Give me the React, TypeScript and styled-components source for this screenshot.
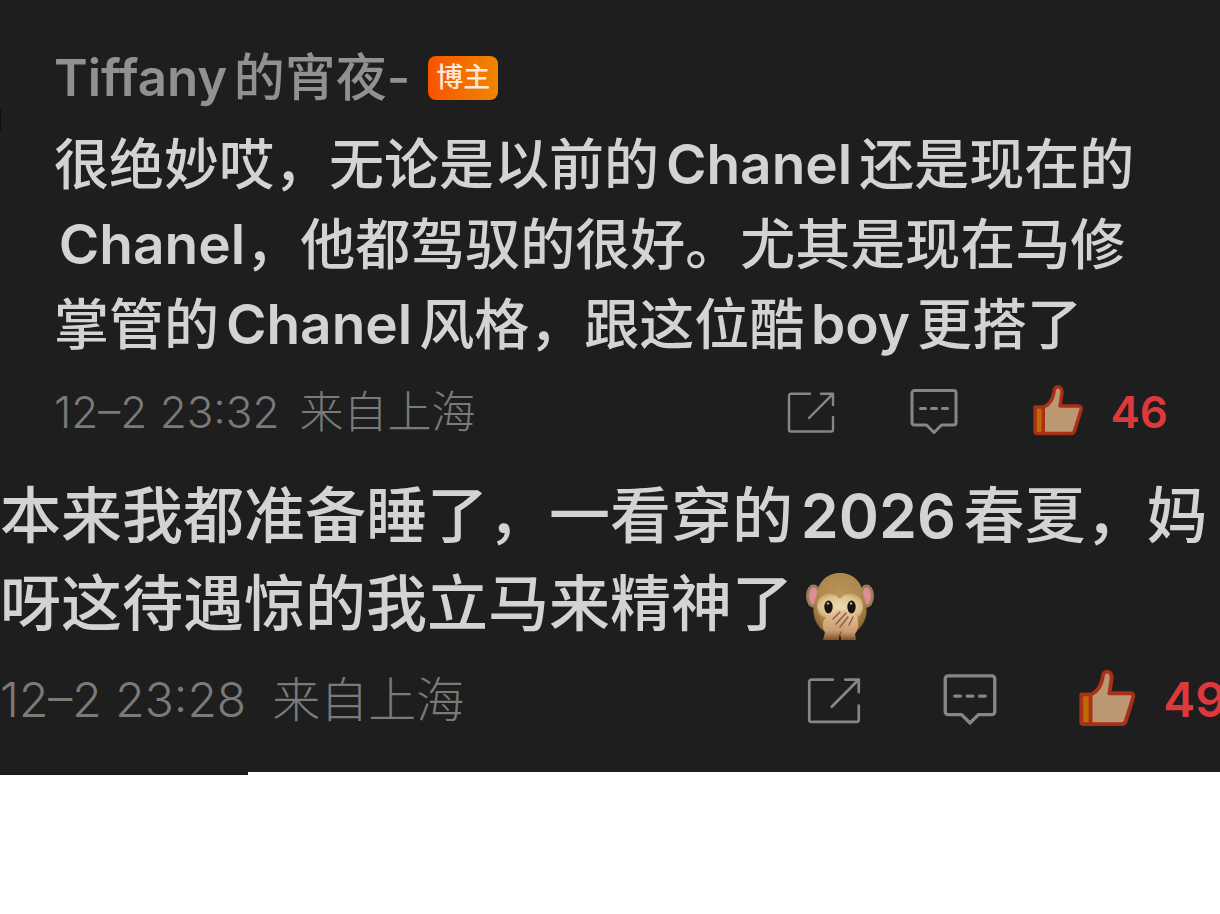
import React from "react";
import styled, { createGlobalStyle } from "styled-components";

const GlobalStyle = createGlobalStyle`
  * { box-sizing: border-box; }
  body {
    margin: 0;
    background: #ffffff;
    font-family: Inter, "Noto Sans CJK SC", sans-serif;
    text-autospace: normal;
  }
`;

const Thread = styled.main`
  position: relative;
  overflow: hidden;
  padding-bottom: 44px;
  background: #1e1e1e;
`;

const AvatarEdge = styled.span`
  position: absolute;
  left: -29px;
  top: 104px;
  width: 30px;
  height: 32px;
  border-radius: 8px;
  background: #0c0c0c;
`;

const Comment = styled.article<{ $inset?: boolean }>`
  padding: ${(p) => (p.$inset ? "48px 52px 0 54px" : "36px 0 0")};
`;

const Author = styled.header`
  display: flex;
  align-items: center;
  gap: 18px;
  height: 60px;
  margin-bottom: 16px;
`;

const Name = styled.a`
  color: #919191;
  font-size: 51px;
  font-weight: 500;
  line-height: 60px;
  text-decoration: none;
  white-space: nowrap;
`;

const Badge = styled.span`
  padding: 0 8px;
  border-radius: 8px;
  background: linear-gradient(90deg, #f75400, #ef8600);
  color: #ffe9da;
  font-size: 27px;
  font-weight: 500;
  line-height: 44px;
`;

const Body = styled.p<{ $large?: boolean }>`
  margin: 0;
  color: #d3d3d3;
  font-size: ${(p) => (p.$large ? 61 : 55)}px;
  font-weight: 500;
  line-height: ${(p) => (p.$large ? 88 : 80)}px;
  white-space: nowrap;
`;

const Latin = styled.span`
  font-weight: 600;
`;

const Meta = styled.footer<{ $large?: boolean }>`
  display: flex;
  align-items: center;
  justify-content: space-between;
  height: ${(p) => (p.$large ? 56 : 48)}px;
  margin-top: 24px;
  margin-right: ${(p) => (p.$large ? -6 : 0)}px;
  font-size: ${(p) => (p.$large ? 48 : 44)}px;
  line-height: ${(p) => (p.$large ? 56 : 48)}px;
`;

const Stamp = styled.div<{ $large?: boolean }>`
  display: flex;
  gap: ${(p) => (p.$large ? 26 : 20)}px;
  color: #7a7a7a;
  font-weight: 300;
  white-space: nowrap;
`;

const Actions = styled.div<{ $large?: boolean }>`
  display: flex;
  align-items: center;
  gap: ${(p) => (p.$large ? 82 : 75)}px;
`;

const Action = styled.button<{ $large?: boolean }>`
  display: flex;
  align-items: center;
  gap: 30px;
  padding: 0;
  border: 0;
  background: none;
  color: #dd393c;
  font: inherit;
  font-weight: 600;
  cursor: pointer;

  svg {
    display: block;
    width: ${(p) => (p.$large ? 54 : 48)}px;
    height: ${(p) => (p.$large ? 54 : 48)}px;
    overflow: visible;
  }
`;

const Emoji = styled.svg`
  width: 70px;
  height: 70px;
  margin-left: 12px;
  vertical-align: -15px;
`;

const BottomEdge = styled.div`
  width: 248px;
  height: 3px;
  background: #1e1a1c;
`;

const ShareIcon = () => (
  <svg viewBox="0 0 48 48" fill="none" stroke="#868686" strokeWidth="2.4" strokeLinejoin="round" strokeLinecap="round" aria-hidden="true">
    <path d="M23 5.8H4a2 2 0 0 0-2 2V41.500a2 2 0 0 0 2 2H44a2 2 0 0 0 2-2V29M34 5.800H46V17M46 5.800L22 30" />
  </svg>
);

const ReplyIcon = () => (
  <svg viewBox="0 0 48 48" fill="none" stroke="#868686" strokeWidth="3" strokeLinejoin="round" strokeLinecap="round" aria-hidden="true">
    <path d="M4.500 2.500H43.500a2.500 2.500 0 0 1 2.500 2.500V34.500a2.500 2.500 0 0 1-2.500 2.500H31.500L24 44.500L16.500 37H4.500A2.500 2.500 0 0 1 2 34.500V5A2.500 2.500 0 0 1 4.500 2.500Z" />
    <path d="M10.500 20.500h5M21.500 20.500h5M32.500 20.500h5" />
  </svg>
);

const LikeIcon = () => (
  <svg viewBox="1 3 48 48" aria-hidden="true">
    <path
      d="M3 22H12C18 19 21 14 22 7C22.300 3.500 23.500 1.800 26 1.800C29 1.800 30.300 4.500 30 8L28 21H46.500C49 21 49.800 22.500 49 25L42.500 46Q41.700 48.500 39 48.500H5Q3 48.500 3 46.500Z"
      fill="#bb9871"
    />
    <path d="M3 22H11V48H3Z" fill="#bd6a00" />
    <path
      d="M11.300 22V48M3 22H12C18 19 21 14 22 7C22.300 3.500 23.500 1.800 26 1.800C29 1.800 30.300 4.500 30 8L28 21H46.500C49 21 49.800 22.500 49 25L42.500 46Q41.700 48.500 39 48.500H5Q3 48.500 3 46.500Z"
      fill="none"
      stroke="#a93018"
      strokeWidth="3.400"
      strokeLinejoin="round"
    />
  </svg>
);

const MonkeyEmoji = () => (
  <Emoji viewBox="0 0 70 70" role="img" aria-label="捂嘴的猴子">
    <defs>
      <radialGradient id="fur" cx="50%" cy="40%" r="60%">
        <stop offset="0" stopColor="#bd9659" />
        <stop offset="0.75" stopColor="#ad864d" />
        <stop offset="1" stopColor="#83602f" />
      </radialGradient>
      <radialGradient id="face" cx="50%" cy="55%" r="60%">
        <stop offset="0" stopColor="#ecd9b0" />
        <stop offset="0.7" stopColor="#dfc492" />
        <stop offset="1" stopColor="#c6a26c" />
      </radialGradient>
      <linearGradient id="hand" x1="0" y1="0" x2="0" y2="1">
        <stop offset="0" stopColor="#e6c19a" />
        <stop offset="0.7" stopColor="#c99b70" />
        <stop offset="1" stopColor="#7d5026" />
      </linearGradient>
    </defs>
    <ellipse cx="8.500" cy="25" rx="7.500" ry="11.500" fill="#9c7d55" />
    <ellipse cx="61.500" cy="25" rx="7.500" ry="11.500" fill="#9c7d55" />
    <ellipse cx="8.500" cy="25" rx="4.500" ry="8.500" fill="#dc8c98" />
    <ellipse cx="61.500" cy="25" rx="4.500" ry="8.500" fill="#dc8c98" />
    <path d="M35 2C49 2 57 12 58.500 24C60 30 62 35 61.500 42C60 56 49 65 35 65C21 65 10 56 8.500 42C8 35 10 30 11.500 24C13 12 21 2 35 2Z" fill="url(#fur)" />
    <path d="M35 28C31 23 25 21.500 20 23.500C12 26.500 10.500 36 14 42C18 48 25 46 30 46H41C46 46 53 48 56.500 42C59.500 36 58 26.500 50 23.500C45 21.500 39 23 35 28Z" fill="url(#face)" />
    <ellipse cx="23.500" cy="36" rx="4.200" ry="6.500" fill="#191310" />
    <ellipse cx="46.500" cy="36" rx="4.200" ry="6.500" fill="#191310" />
    <circle cx="23" cy="32.500" r="1.300" fill="#aaa" />
    <circle cx="46" cy="32.500" r="1.300" fill="#aaa" />
    <path d="M51 69H36L35 56L43 45Q47 41 48 46L50 44Q53 44 52.500 49Q55 56 50 63Z" fill="url(#hand)" />
    <path d="M18 69L20 61C15 54 19 45 26 44L32 39Q35 38 35 41Q40 37 41 41Q45 41 43 45Q46 47 42 51L39 57Q37 62 34 64V69Z" fill="url(#hand)" />
    <path d="M35 41L28 48M41 42L31 53M43 46L35 56M48 46L44 54M34 65L36 61" fill="none" stroke="#8b5b38" strokeWidth="1.300" strokeLinecap="round" />
  </Emoji>
);

type MetaRowProps = { time: string; place: string; likes: number; large?: boolean };

const MetaRow = ({ time, place, likes, large }: MetaRowProps) => (
  <Meta $large={large}>
    <Stamp $large={large}>
      <time>{time}</time>
      <span>{place}</span>
    </Stamp>
    <Actions $large={large}>
      <Action $large={large} type="button" aria-label="转发"><ShareIcon /></Action>
      <Action $large={large} type="button" aria-label="评论"><ReplyIcon /></Action>
      <Action $large={large} type="button"><LikeIcon />{likes}</Action>
    </Actions>
  </Meta>
);

export default function App() {
  return (
    <>
      <GlobalStyle />
      <Thread>
        <AvatarEdge />
        <Comment $inset>
          <Author>
            <Name href="#"><Latin>Tiffany</Latin>的宵夜-</Name>
            <Badge>博主</Badge>
          </Author>
          <Body>
            很绝妙哎，无论是以前的<Latin>Chanel</Latin>还是现在的<br />
            {"\u200a"}<Latin>Chanel</Latin>，他都驾驭的很好。尤其是现在马修<br />
            掌管的<Latin>Chanel</Latin>风格，跟这位酷<Latin>boy</Latin>更搭了
          </Body>
          <MetaRow time="12–2 23:32" place="来自上海" likes={46} />
        </Comment>
        <Comment>
          <Body $large>
            本来我都准备睡了，一看穿的<Latin>2026</Latin>春夏，妈<br />
            呀这待遇惊的我立马来精神了<MonkeyEmoji />
          </Body>
          <MetaRow time="12–2 23:28" place="来自上海" likes={49} large />
        </Comment>
      </Thread>
      <BottomEdge />
    </>
  );
}
